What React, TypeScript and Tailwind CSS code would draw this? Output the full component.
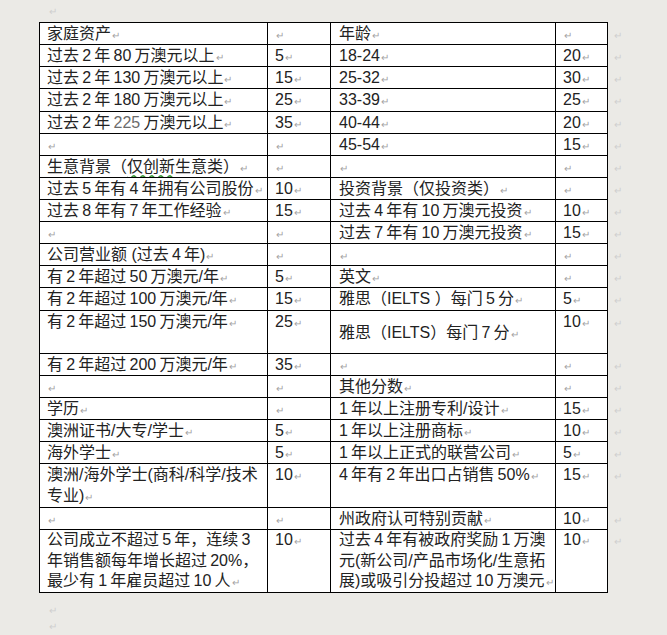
import type { ReactNode } from 'react';

// Word puts a narrow gap between CJK and latin runs; a thin space comes close
const t = (s: string) => s.replace(/ /g, '\u2009');

// paragraph mark, as Word shows it
const M = ({ light = false }: { light?: boolean }) => (
    <span className={light ? 'text-[10px] leading-none text-[#cfcfcf] ml-px' : 'text-[10px] leading-none text-[#a3a3a3] ml-px'}>↵</span>
);

const T = ({ children }: { children?: ReactNode }) => (
    <>
        {typeof children === 'string' ? t(children) : children}
        <M />
    </>
);

type RowProps = {
    a?: ReactNode;
    b?: ReactNode;
    c?: ReactNode;
    d?: ReactNode;
    h?: string;
    lead?: string;
    midC?: boolean;
};

const Row = ({ a, b, c, d, h = 'h-[22px]', lead = 'leading-[21px]', midC = false }: RowProps) => {
    const cell = `bg-white border border-black px-[7px] py-0 align-top whitespace-nowrap overflow-hidden ${h} ${lead}`;
    return (
        <tr>
            <td className={cell}><T>{a}</T></td>
            <td className={cell}><T>{b}</T></td>
            <td className={midC ? `bg-white border border-black pl-[8px] pr-[2px] py-0 align-middle whitespace-nowrap overflow-hidden ${h} ${lead}` : `bg-white border border-black pl-[8px] pr-[2px] py-0 align-top whitespace-nowrap overflow-hidden ${h} ${lead}`}><T>{c}</T></td>
            <td className={cell}><T>{d}</T></td>
            <td className={`pl-[5px] py-0 align-top ${lead}`}><M light /></td>
        </tr>
    );
};

export default function App() {
    return (
        <div
            className="h-[635px] overflow-hidden w-full bg-[#ebeae6] text-[16px] text-[#222] pl-[39px]"
            style={{ fontFamily: '"Liberation Sans", "Noto Sans CJK SC", sans-serif' }}
        >
            <div className="h-[22px] pl-[9px] leading-[20px]"><M light /></div>
            <table className="w-[608px] border-collapse table-fixed">
                <colgroup>
                    <col className="w-[228px]" />
                    <col className="w-[63px]" />
                    <col className="w-[225px]" />
                    <col className="w-[52px]" />
                    <col className="w-[40px]" />
                </colgroup>
                <tbody>
                    <Row a="家庭资产" c="年龄" />
                    <Row a="过去 2 年 80 万澳元以上" b="5" c="18-24" d="20" />
                    <Row a="过去 2 年 130 万澳元以上" b="15" c="25-32" d="30" />
                    <Row a="过去 2 年 180 万澳元以上" b="25" c="33-39" d="25" h="h-[23px]" />
                    <Row a={<>{t('过去 2 年 ')}<span className="text-[#6b6b6b]">225</span>{t(' 万澳元以上')}</>} b="35" c="40-44" d="20" />
                    <Row c="45-54" d="15" />
                    <Row a={<>生意背景（<span className="underline decoration-wavy decoration-[#3c9a3c] underline-offset-2">仅创新</span>生意类）</>} />
                    <Row a="过去 5 年有 4 年拥有公司股份" b="10" c="投资背景（仅投资类）" />
                    <Row a="过去 8 年有 7 年工作经验" b="15" c="过去 4 年有 10 万澳元投资" d="10" />
                    <Row c="过去 7 年有 10 万澳元投资" d="15" />
                    <Row a={<>公司营业额 ({t('过去 4 年')})</>} />
                    <Row a="有 2 年超过 50 万澳元/年" b="5" c="英文" />
                    <Row a="有 2 年超过 100 万澳元/年" b="15" c={<>雅思（IELTS ）{t('每门 5 分')}</>} d="5" h="h-[23px]" />
                    <Row a="有 2 年超过 150 万澳元/年" b="25" c={<>雅思（IELTS）{t('每门 7 分')}</>} d="10" h="h-[43px]" midC />
                    <Row a="有 2 年超过 200 万澳元/年" b="35" />
                    <Row c="其他分数" />
                    <Row a="学历" c="1 年以上注册专利/设计" d="15" />
                    <Row a="澳洲证书/大专/学士" b="5" c="1 年以上注册商标" d="10" />
                    <Row a="海外学士" b="5" c="1 年以上正式的联营公司" d="5" />
                    <Row a={<>澳洲/海外学士(商科/科学/技术<br />专业)</>} b="10" c="4 年有 2 年出口占销售 50%" d="15" h="h-[44px]" />
                    <Row c="州政府认可特别贡献" d="10" />
                    <Row
                        a={<>{t('公司成立不超过 5 年，连续 3')}<br />{t('年销售额每年增长超过 20%，')}<br />{t('最少有 1 年雇员超过 10 人')}</>}
                        b="10"
                        c={<>{t('过去 4 年有被政府奖励 1 万澳')}<br />元(新公司/产品市场化/生意拓<br />{t('展)或吸引分投超过 10 万澳元')}</>}
                        d="10"
                        h="h-[63px]"
                        lead="leading-[20.6px]"
                    />
                </tbody>
            </table>
            <div className="h-[22px] pl-[9px] pt-[6px] leading-[20px]"><M light /></div>
            <div className="h-[22px] pl-[9px] leading-[20px]"><M light /></div>
        </div>
    );
}
